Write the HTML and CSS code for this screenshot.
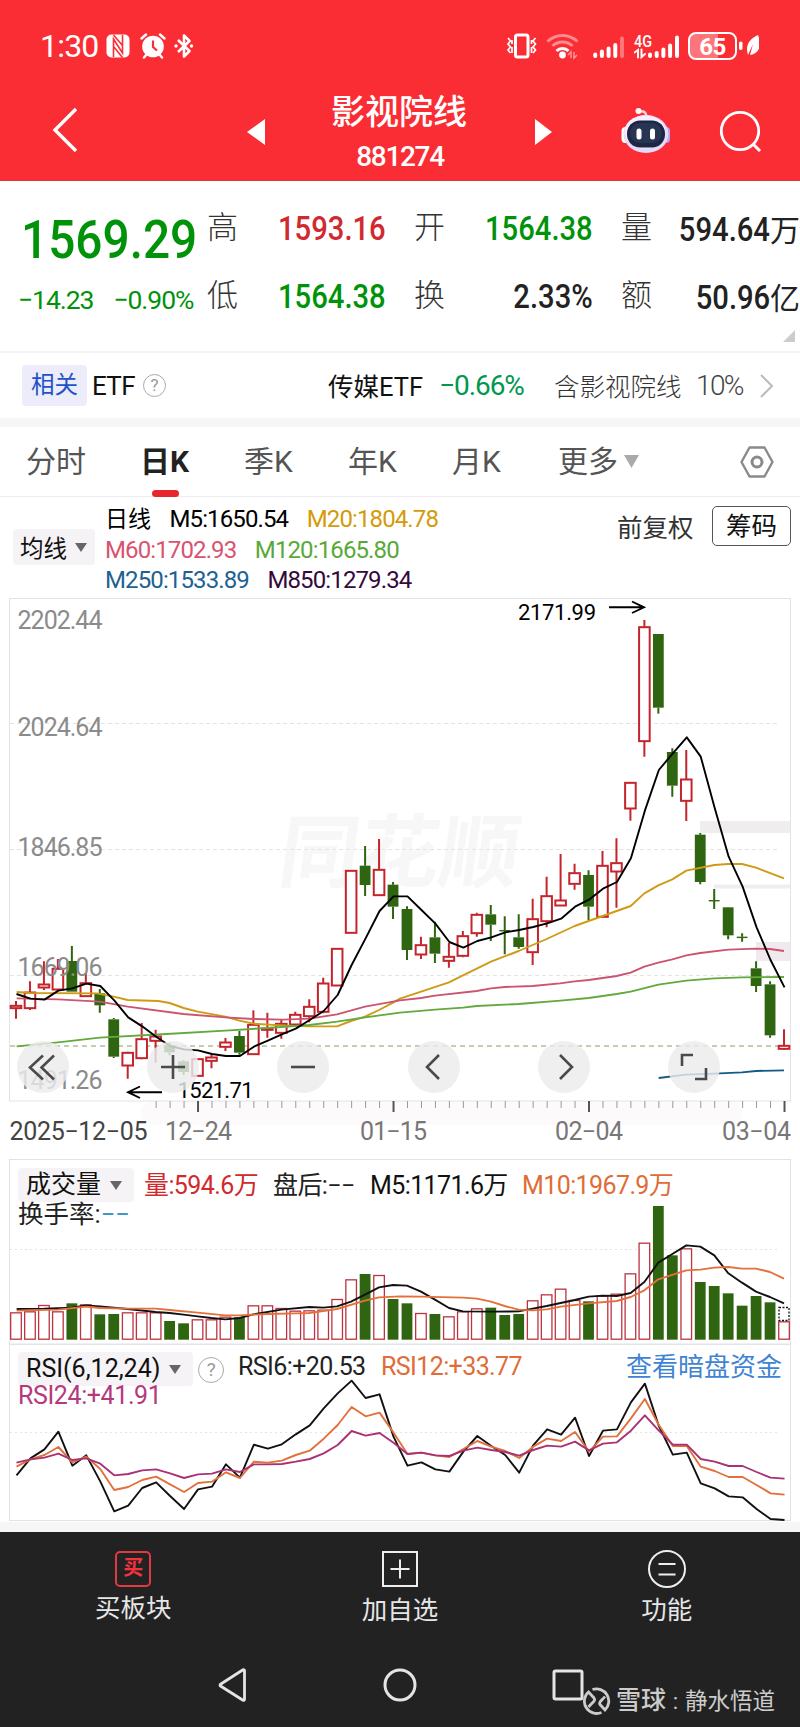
FILE: index.html
```html
<!DOCTYPE html>
<html lang="zh-CN">
<head>
  <meta charset="UTF-8" />
  <meta name="viewport" content="width=device-width, initial-scale=1" />
  <title>影视院线 881274</title>
  <link rel="stylesheet" href="styles.css">
</head>
<body>
  <header class="header">
    <div class="status">
      <div class="status-left">
        <span class="clock">1:30</span>
        <svg class="nfc" width="24" height="24" viewBox="0 0 24 24">
          <rect x="0.5" y="0.5" width="23" height="23" rx="5" fill="#fff"/>
          <path d="M7.500 23V5l9 14V1M7.500 1l9 10.500M7.500 12.500l9 11" fill="none" stroke="#fb2d34" stroke-width="1.600"/>
        </svg>
        <svg class="alarm" width="26" height="26" viewBox="0 0 26 26">
          <circle cx="13" cy="13.500" r="10.800" fill="#fff"/>
          <path d="M1.500 5.500L6 1.500M24.500 5.500L20 1.500M4 24.500l3-3.500M22 24.500l-3-3.500" stroke="#fff" stroke-width="2.400" stroke-linecap="round"/>
          <path d="M13 7.500v6.500l4 3.500" fill="none" stroke="#fb2d34" stroke-width="2.200"/>
        </svg>
        <svg class="bluetooth" width="20" height="26" viewBox="0 0 20 26">
          <path d="M4 7l11.500 11L10 23.500V2.500L15.500 8 4 19" fill="none" stroke="#fff" stroke-width="2.600" stroke-linejoin="round"/>
          <circle cx="2" cy="13" r="1.700" fill="#fff"/><circle cx="17.500" cy="13" r="1.700" fill="#fff"/>
        </svg>
      </div>
      <div class="status-right">
        <svg width="32" height="28" viewBox="0 0 32 28" fill="none" stroke="#fff">
          <rect x="9.500" y="3" width="12.500" height="22" rx="2" stroke-width="3"/>
          <path d="M2 6l2.500 3L2 12l2.500 3L2 18l2.500 3M6 8v4M6 15v6M29.500 6L27 9l2.500 3-2.500 3 2.500 3-2.500 3M25.500 8v4M25.500 15v6" stroke-width="1.700"/>
        </svg>
        <svg class="wifi" width="34" height="28" viewBox="0 0 34 28" fill="none" stroke="#fff" stroke-width="3">
          <path d="M1.500 9.500a21.500 21.500 0 0 1 30 0M6.500 14a14.500 14.500 0 0 1 20 0" opacity="0.450"/>
          <path d="M10.500 19a8.500 8.500 0 0 1 12 0"/>
          <circle cx="16.500" cy="23" r="3.400" fill="#fff" stroke="none"/>
          <path d="M22 23l3-3v6M28 20v6l3-3" stroke-width="1.500" opacity="0.500"/>
        </svg>
        <svg class="signal" width="32" height="28" viewBox="0 0 32 28" stroke="#fff" stroke-width="4" stroke-linecap="round">
          <path d="M2.200 22.500v1.500M8.900 19.500v4.500M15.600 16.500v7.500M22.300 13v11"/>
          <path d="M29 6.500v17.500" opacity="0.350"/>
        </svg>
        <svg class="signal-4g" width="46" height="28" viewBox="0 0 46 28" stroke="#fff" stroke-width="4" stroke-linecap="round">
          <path d="M16 22.500v1.500M22.700 21v3M29.400 17.500v6.500M36.100 13.500v10.500M43 5.500v18.500"/>
          <path d="M0.500 20.500l3.500-2.500v7.500M7.500 17.500v7.500l3.500-3" fill="none" stroke-width="2"/>
          <text x="0" y="15" textLength="18" lengthAdjust="spacingAndGlyphs" stroke="none" fill="#fff">4G</text>
        </svg>
        <div class="battery">65</div>
        <svg class="leaf" width="20" height="28" viewBox="0 0 20 28">
          <rect x="0" y="9.500" width="3.500" height="8.500" rx="1.700" fill="#fff"/>
          <path d="M9 23C6 14 10 7 19 3c4 10 2 18-8 20l3-11z" fill="#fff"/>
        </svg>
      </div>
    </div>
    <div class="titlebar">
      <svg class="back" width="26" height="46" viewBox="0 0 26 46"><path d="M24 2L3 23l21 21" fill="none" stroke="#fff" stroke-width="3.400"/></svg>
      <svg class="prev" width="18" height="26" viewBox="0 0 18 26"><path d="M18 0v26L0 13z" fill="#fff"/></svg>
      <div class="title">
        <h1>影视院线</h1>
        <div class="code">881274</div>
      </div>
      <svg class="next" width="18" height="26" viewBox="0 0 18 26"><path d="M0 0v26l17-13z" fill="#fff"/></svg>
      <svg class="robot" width="50" height="48" viewBox="0 0 50 48">
        <path d="M18 4.500c5-1 7 1 7.500 5" fill="none" stroke="#f9cdd8" stroke-width="2.500"/>
        <circle cx="17.500" cy="4" r="3" fill="#fff"/>
        <rect x="0.500" y="20" width="9" height="16" rx="4" fill="#fff"/>
        <rect x="40" y="20" width="9" height="16" rx="4" fill="#b9a3f2"/>
        <ellipse cx="25" cy="27" rx="22.500" ry="19" fill="#e4d9fb"/>
        <ellipse cx="24" cy="25" rx="20.500" ry="16.500" fill="#f6effd"/>
        <rect x="6" y="13.500" width="38" height="27" rx="13" fill="#1d2744"/>
        <rect x="9" y="16" width="32" height="20" rx="10" fill="#303f5b" opacity="0.600"/>
        <rect x="15.500" y="21.500" width="5" height="11" rx="2.500" fill="#fff"/>
        <rect x="29" y="21.500" width="5" height="11" rx="2.500" fill="#fff"/>
      </svg>
      <svg class="search" width="44" height="44" viewBox="0 0 44 44"><circle cx="21" cy="21" r="18.700" fill="none" stroke="#fff" stroke-width="2.800"/><path d="M34 34l7 7" stroke="#fff" stroke-width="3"/></svg>
    </div>
  </header>

  <section class="quote">
    <div class="last">
      <div class="last-price">1569.29</div>
      <div class="last-change"><span>−14.23</span><span>−0.90%</span></div>
    </div>
    <div class="stats">
      <div class="stat"><label>高</label><b class="up"><span>1593.16</span></b></div>
      <div class="stat"><label>开</label><b class="down"><span>1564.38</span></b></div>
      <div class="stat"><label>量</label><b><span>594.64</span><i>万</i></b></div>
      <div class="stat"><label>低</label><b class="down"><span>1564.38</span></b></div>
      <div class="stat"><label>换</label><b><span>2.33%</span></b></div>
      <div class="stat"><label>额</label><b><span>50.96</span><i>亿</i></b></div>
    </div>
    <svg class="corner" width="12" height="12" viewBox="0 0 12 12"><path d="M12 0v12H0z" fill="#ccc"/></svg>
  </section>

  <section class="related">
    <span class="tag">相关</span>
    <span class="etf">ETF</span>
    <span class="help">?</span>
    <span class="etf-name">传媒ETF</span>
    <span class="etf-change">−0.66%</span>
    <span class="etf-weight">含影视院线</span>
    <span class="etf-pct">10%</span>
    <svg width="14" height="24" viewBox="0 0 14 24"><path d="M1 1l11 11L1 23" fill="none" stroke="#bbb" stroke-width="2"/></svg>
  </section>

  <nav class="tabs">
    <span>分时</span>
    <span class="active">日K</span>
    <span>季K</span>
    <span>年K</span>
    <span>月K</span>
    <span>更多<svg width="15" height="13" viewBox="0 0 15 13"><path d="M0 0h15L7.500 13z" fill="#aaa"/></svg></span>
    <svg class="gear" width="34" height="32" viewBox="0 0 34 32" fill="none" stroke="#8a8a8a"><path d="M9.500 1.500h15l8 14.500-8 14.500h-15L1.500 16z" stroke-width="2.400" stroke-linejoin="round"/><circle cx="17" cy="16" r="5" stroke-width="3"/></svg>
  </nav>

  <section class="averages">
    <span class="pill pill-ma">均线<i class="caret"></i></span>
    <div class="ma-list">
      <div><span class="cjk">日线</span><span>M5:1650.54</span><span class="m20">M20:1804.78</span></div>
      <div><span class="m60">M60:1702.93</span><span class="m120">M120:1665.80</span></div>
      <div><span class="m250">M250:1533.89</span><span class="m850">M850:1279.34</span></div>
    </div>
    <span class="adjust">前复权</span>
    <span class="chips">筹码</span>
  </section>

  <section class="kline">
    <svg id="kline" width="800" height="561" viewBox="0 0 800 561"></svg>
    <div class="tools">
      <span><svg width="52" height="52"><path d="M26 14.500L13 26.500l13 12M37 14.500L24.500 26.500l12.500 12"/></svg></span>
      <span><svg width="52" height="52"><path d="M26 14v24M14 26h24"/></svg></span>
      <span><svg width="52" height="52"><path d="M14 26h24"/></svg></span>
      <span><svg width="52" height="52"><path d="M31 14L19 26l12 12"/></svg></span>
      <span><svg width="52" height="52"><path d="M22 14l12 12-12 12"/></svg></span>
      <span><svg width="52" height="52"><path d="M14 25V14h11M27 38h11V27"/></svg></span>
    </div>
  </section>

  <section class="panel volume">
    <svg id="volume" width="800" height="185" viewBox="0 0 800 185"></svg>
    <div class="legend">
      <div class="legend-row">
        <span class="pill pill-vol">成交量<i class="caret"></i></span>
        <span class="red">量:594.6万</span>
        <span class="after">盘后:<em>−−</em></span>
        <span class="vm5">M5:1171.6万</span>
        <span class="orange">M10:1967.9万</span>
      </div>
      <div class="legend-sub">换手率:<em class="blue">−−</em></div>
    </div>
  </section>

  <section class="panel rsi">
    <svg id="rsi" width="800" height="178" viewBox="0 0 800 178"></svg>
    <div class="legend">
      <div class="legend-row">
        <span class="pill pill-rsi">RSI(6,12,24)<i class="caret"></i></span>
        <span class="help">?</span>
        <span class="rsi6">RSI6:+20.53</span>
        <span class="orange">RSI12:+33.77</span>
        <a class="link">查看暗盘资金</a>
      </div>
      <div class="legend-sub purple">RSI24:+41.91</div>
    </div>
  </section>

  <footer class="footer">
    <div class="actions">
      <div class="action">
        <span class="buy">买</span>
        <span>买板块</span>
      </div>
      <div class="action">
        <svg width="36" height="36" viewBox="0 0 36 36" fill="none" stroke="#eee" stroke-width="2"><rect x="1" y="1" width="34" height="34"/><path d="M18 8.500v19M8.500 18h19"/></svg>
        <span>加自选</span>
      </div>
      <div class="action">
        <svg width="38" height="38" viewBox="0 0 38 38" fill="none" stroke="#eee" stroke-width="2"><circle cx="19" cy="19" r="18"/><path d="M10.500 14h17M10.500 24.500h17"/></svg>
        <span>功能</span>
      </div>
    </div>
    <div class="sysnav">
      <svg width="30" height="34" viewBox="0 0 30 34"><path d="M26.500 2.500v29a1 1 0 0 1-1.500.800L2.500 18a1 1 0 0 1 0-1.700L25 1.800a1 1 0 0 1 1.500.700z" fill="none" stroke="#e4e4e4" stroke-width="2.800"/></svg>
      <svg width="34" height="34" viewBox="0 0 34 34"><circle cx="17" cy="17" r="15" fill="none" stroke="#e4e4e4" stroke-width="3"/></svg>
      <svg width="32" height="32" viewBox="0 0 32 32"><rect x="2" y="2" width="28" height="28" rx="1.500" fill="none" stroke="#e4e4e4" stroke-width="3"/></svg>
    </div>
    <div class="credit">
      <svg width="28" height="28" viewBox="0 0 28 28" fill="none" stroke="#ccc" stroke-width="2.800">
        <path d="M9.500 2.500a12.300 12.300 0 0 1 12.500 20.500L17 17.500c-2-2.500 2-4 5-8M18.500 25.500A12.300 12.300 0 0 1 5.500 5l5.500 6c2 2.500-1 4-5.500 9"/>
      </svg>
      <span class="brand">雪球</span><span class="colon">:</span><span>静水悟道</span>
    </div>
  </footer>
  <script src="charts.js"></script>
</body>
</html>
```
FILE: styles.css
```css
    * {
      box-sizing: border-box;
    }
    body {
      font-family: Roboto, "Noto Sans CJK SC", sans-serif;
      background: #fff;
      margin: 0;
      width: 800px;
      color: #222;
      overflow-x: hidden;
    }
    svg {
      display: block;
      flex: none;
    }
    i, em {
      font-style: normal;
    }
    span, a, label, b {
      white-space: nowrap;
    }

    /* Header */
    .header {
      height: 181px;
      background: #fb2d34;
      color: #fff;
      padding-top: 26px;
      border-bottom: 1px solid #d9373d;
    }
    .status {
      height: 40px;
      display: flex;
      justify-content: space-between;
      align-items: center;
      padding: 0 41px 0 40px;
    }
    .status-left, .status-right {
      display: flex;
      align-items: center;
    }
    .clock {
      font-size: 32px;
      width: 66px;
      letter-spacing: -0.800px;
    }
    .alarm {
      margin-left: 10px;
    }
    .bluetooth {
      margin-left: 8px;
    }
    .wifi {
      margin-left: 8px;
    }
    .signal {
      margin-left: 13px;
    }
    .signal-4g {
      margin-left: 9px;
      font-size: 17px;
      font-weight: 500;
    }
    .battery {
      width: 49px;
      height: 28px;
      margin-left: 8px;
      border: 2px solid #fff;
      border-radius: 8px;
      background: linear-gradient(90deg, #fd747a 62%, #fb2d34 62%);
      font-size: 24px;
      font-weight: 700;
      line-height: 26px;
      text-align: center;
      letter-spacing: -0.500px;
    }
    .leaf {
      margin-left: 2px;
    }
    .titlebar {
      height: 114px;
      display: flex;
      align-items: center;
    }
    .back {
      margin: 14px 0 0 52px;
    }
    .prev {
      margin: 17px 0 0 169px;
    }
    .title {
      width: 270px;
      padding-top: 24px;
      text-align: center;
    }
    .title h1 {
      margin: -2px 0 0 -2px;
      font-size: 34px;
      line-height: 46px;
      font-weight: 500;
    }
    .code {
      font-size: 28px;
      line-height: 44px;
      font-weight: 500;
      letter-spacing: -1.300px;
    }
    .next {
      margin: 17px 0 0;
    }
    .robot {
      margin: 16px 0 0 68px;
    }
    .search {
      margin: 18px 0 0 48px;
    }

    /* Quote */
    .quote {
      position: relative;
      height: 172px;
      display: flex;
      border-bottom: 2px solid #f4f4f6;
    }
    .last {
      width: 207px;
      color: #00930a;
      padding: 30px 0 0 18px;
    }
    .last-price {
      margin-left: 3px;
      font-size: 54px;
      font-weight: 500;
      line-height: 58px;
      transform: scaleX(0.885);
      transform-origin: left;
    }
    .last-change {
      margin-top: 12px;
      display: flex;
      gap: 20px;
      font-size: 26.500px;
      line-height: 38px;
      letter-spacing: -1.050px;
    }
    .stats {
      width: 593px;
      padding-top: 13px;
      display: grid;
      grid-template-columns: repeat(3, 179px);
      grid-auto-rows: 68px;
      column-gap: 28px;
    }
    .stat {
      display: flex;
      justify-content: space-between;
      align-items: center;
    }
    .stat label {
      font-size: 31px;
      line-height: 40px;
      font-weight: 300;
      color: #333;
      margin-top: -1px;
    }
    .stat b {
      font-size: 33px;
      font-weight: 500;
    }
    .stat b span {
      display: inline-block;
      transform: scaleX(0.885);
      transform-origin: right;
    }
    .stat i {
      font-size: 30px;
      font-weight: 400;
    }
    .up {
      color: #d0292f;
    }
    .down {
      color: #00930a;
    }
    .corner {
      position: absolute;
      right: 5px;
      bottom: 9px;
    }

    /* Related ETF */
    .related {
      height: 74px;
      padding-left: 22px;
      display: flex;
      align-items: center;
      border-bottom: 9px solid #f6f6f7;
      font-size: 26px;
    }
    .tag {
      width: 65px;
      height: 41px;
      line-height: 41px;
      border-radius: 4px;
      background: #ececfa;
      color: #2352c8;
      font-size: 23.500px;
      text-align: center;
    }
    .etf {
      margin-left: 5px;
      width: 51px;
      color: #111;
      letter-spacing: -0.700px;
    }
    .help {
      width: 23px;
      height: 23px;
      border: 1.500px solid #aaa;
      border-radius: 50%;
      color: #999;
      font-size: 17px;
      line-height: 20px;
      text-align: center;
    }
    .etf-name {
      margin: -3px 0 0 162px;
      width: 111px;
      color: #111;
      font-size: 25.500px;
    }
    .etf-change {
      width: 115px;
      margin-top: -1px;
      color: #00984f;
      font-size: 28px;
      letter-spacing: -1.050px;
    }
    .etf-weight {
      width: 142px;
      margin-top: -3px;
      color: #333;
      font-size: 25.500px;
      font-weight: 300;
    }
    .etf-pct {
      width: 64px;
      margin-top: -1px;
      color: #444;
      font-size: 28px;
      font-weight: 300;
      letter-spacing: -1.600px;
    }

    /* Period tabs */
    .tabs {
      height: 70px;
      padding-left: 26px;
      display: grid;
      grid-template-columns: 114px 104px 104px 104px 106px 182px 34px;
      align-items: center;
      border-bottom: 1px solid #ececf0;
      font-size: 30px;
      color: #555;
    }
    .tabs span {
      position: relative;
      line-height: 69px;
    }
    .tabs span svg {
      display: inline-block;
      margin-left: 6px;
      vertical-align: 4px;
    }
    .tabs .active {
      color: #222;
      font-weight: 700;
    }
    .tabs .active::after {
      content: "";
      position: absolute;
      left: 12px;
      bottom: -1px;
      width: 27px;
      height: 7px;
      border-radius: 4px;
      background: #e8272c;
    }

    /* Moving averages */
    .averages {
      height: 101px;
      display: flex;
      align-items: flex-start;
      padding: 9px 9px 0 13px;
    }
    .pill {
      display: flex;
      align-items: center;
      background: #f5f3f5;
      border-radius: 4px;
      color: #111;
    }
    .caret {
      width: 0;
      height: 0;
      border: 6px solid transparent;
      border-top: 9px solid #666;
      border-bottom: none;
    }
    .pill-ma {
      margin-top: 23px;
      width: 82px;
      height: 36px;
      padding-left: 7px;
      font-size: 23.500px;
      gap: 8px;
    }
    .ma-list {
      margin: -2px 0 0 10px;
      width: 512px;
      font-size: 24px;
      line-height: 31px;
      letter-spacing: -0.880px;
      color: #000;
    }
    .ma-list div {
      display: flex;
      gap: 18.500px;
      height: 30.500px;
    }
    .ma-list .cjk {
      font-size: 23px;
      letter-spacing: 0;
    }
    .m20 {
      color: #d39b0a;
    }
    .m60 {
      color: #d9536f;
    }
    .m120 {
      color: #58a93a;
    }
    .m250 {
      color: #1c6292;
    }
    .m850 {
      color: #34093b;
    }
    .adjust {
      width: 95px;
      font-size: 25.500px;
      line-height: 44px;
      color: #333;
    }
    .chips {
      width: 79px;
      height: 40px;
      border: 1px solid #555;
      border-radius: 5px;
      font-size: 25.500px;
      line-height: 39px;
      text-align: center;
      color: #111;
    }

    /* Candles */
    .kline {
      position: relative;
      height: 561px;
    }
    .tools {
      position: absolute;
      left: 17px;
      top: 443px;
      display: flex;
      gap: 78.200px;
    }
    .tools span {
      width: 52px;
      height: 52px;
      border-radius: 50%;
      background: rgba(235, 235, 237, 0.820);
    }
    .tools path {
      fill: none;
      stroke: #4a4a4a;
      stroke-width: 2.600;
    }
    .axis {
      font-size: 25px;
      fill: #8b8b8b;
    }
    .date {
      font-size: 25px;
      fill: #777;
    }
    .mark {
      font-size: 22px;
      fill: #000;
    }
    .brandmark {
      font-size: 80px;
      font-weight: 700;
      fill: #f7f7f8;
    }
    .line {
      fill: none;
      stroke-width: 1.900;
      stroke-linejoin: round;
    }

    /* Indicator panels */
    .panel {
      display: grid;
    }
    .panel > * {
      grid-area: 1 / 1;
    }
    .legend {
      padding: 9px 18px 0;
      font-size: 25px;
      letter-spacing: -0.600px;
      color: #222;
    }
    .legend-row {
      display: flex;
      height: 34px;
      line-height: 36px;
    }
    .legend .pill {
      padding-left: 8px;
      margin-right: 10px;
      height: 34px;
    }
    .pill-vol {
      width: 116px;
      gap: 9px;
      letter-spacing: 0;
    }
    .legend .pill-rsi {
      width: 175px;
      gap: 9px;
      letter-spacing: 0;
      line-height: 36px;
    }
    .legend .red {
      width: 129px;
      color: #d12a2a;
    }
    .legend .after {
      width: 97px;
    }
    .legend .vm5 {
      width: 152px;
      color: #111;
    }
    .legend-sub {
      font-size: 25.500px;
      line-height: 25px;
      letter-spacing: 0;
    }
    .blue {
      color: #3f97c9;
    }
    .orange {
      color: #e06c38;
    }
    .purple {
      color: #b43a7c;
    }
    .rsi .legend {
      padding-top: 8px;
    }
    .rsi .legend-row {
      line-height: 30px;
    }
    .rsi .legend-sub {
      font-size: 25px;
      line-height: 20px;
      letter-spacing: -0.400px;
    }
    .rsi .help {
      width: 26px;
      height: 26px;
      margin: 5px 14px 0 -5px;
      line-height: 23px;
      font-size: 19px;
    }
    .rsi6 {
      width: 143px;
    }
    .link {
      margin-left: auto;
      font-size: 26px;
      letter-spacing: 0;
      color: #3f84d4;
    }

    /* Footer */
    .footer {
      position: relative;
      height: 205px;
      background: #222;
      border-top: 10px solid #f6f6f6;
      color: #e6e6e6;
    }
    .actions {
      height: 118px;
      padding-top: 19px;
      display: grid;
      grid-template-columns: repeat(3, 1fr);
    }
    .action {
      display: flex;
      flex-direction: column;
      align-items: center;
      font-size: 25.500px;
      line-height: 38px;
      gap: 4px;
    }
    .action:first-child {
      gap: 2px;
    }
    .action:last-child {
      margin-top: -1px;
      gap: 3px;
    }
    .buy {
      width: 36px;
      height: 36px;
      border: 2px solid #e13a42;
      border-radius: 5px;
      color: #f5323c;
      font-size: 20px;
      font-weight: 700;
      line-height: 31px;
      text-align: center;
    }
    .sysnav {
      display: flex;
      align-items: center;
      height: 70px;
      padding-left: 218px;
      gap: 135px;
    }
    .credit {
      position: absolute;
      left: 583px;
      top: 154px;
      display: flex;
      align-items: center;
      font-size: 22.500px;
      line-height: 30px;
      color: #ccc;
    }
    .brand {
      margin-left: 5px;
      font-size: 25px;
      font-weight: 500;
    }
    .colon {
      width: 19px;
      text-align: center;
    }
```
FILE: charts.js
```javascript
const RED = '#c4252c', GREEN = '#2f6410';
const STEP = 13.964;
const cx = i => 16 + i * STEP;

// [direction, high, body top, body bottom, low], in thirds of a pixel
const candles = [
  ['r',543,556,566,596],['r',484,516,566,570],['r',424,492,504,510],['r',417,445,510,512],
  ['g',378,423,515,515],['r',460,488,530,530],['g',507,520,556,578],['g',594,598,710,714],
  ['r',695,697,738,776],['r',609,656,716,718],['r',629,648,664,728],['g',668,676,697,706],
  ['g',720,724,756,765],['r',716,716,769,769],['r',704,711,724,745],['r',654,666,682,693],
  ['g',633,648,698,704],['r',571,613,704,704],['r',578,625,630,653],['r',600,610,640,656],
  ['r',575,583,615,618],['r',538,559,590,607],['r',473,489,577,580],['r',385,385,498,498],
  ['r',151,151,340,340],['g',78,137,195,228],['r',57,148,227,228],['g',186,194,260,297],
  ['g',259,267,390,420],['r',350,374,405,417],['g',305,352,401,429],['r',369,409,424,443],
  ['r',333,347,409,412],['r',278,283,341,350],['g',255,283,314,363],['g',289,330,333,403],
  ['g',283,352,381,386],['r',236,296,398,435],['r',170,227,305,322],['r',102,240,258,258],
  ['r',131,158,193,209],['g',151,165,260,300],['r',93,136,292,292],['r',55,128,156,263],
  ['r',-113,-113,-33,2],['r',-600,-580,-235,-190],['g',-558,-558,-337,-319],['g',-215,-204,-103,-70],
  ['r',-210,-123,-56,3],['g',39,44,186,193],['g',207,240,243,267],['g',261,262,346,358],
  ['g',340,350,353,365],['g',424,445,498,516],['g',484,493,646,653],['r',628,676,688,690]
];

const ma5 = [522,536,539,512,505,491,498,541,592,619,650,678,688,691,702,708,708,680,662,643,626,600,573,525,435,355,273,229,229,270,311,366,383,363,352,337,330,321,310,296,260,239,206,186,115,-28,-150,-200,-248,-190,-36,110,200,322,420,502];
const ma20 = [50,516,90,519,290,520,341,530,383,540,475,543,509,549,551,564,593,575,676,590,718,602,760,611,844,616,928,619,1011,619,1053,603,1095,590,1137,570,1179,548,1200,536,1347,487,1389,466,1473,425,1556,393,1640,357,1724,318,1808,288,1892,258,1933,220,1975,196,2017,178,2059,152,2143,135,2185,132,2226,132,2268,143,2352,175];
const ma60 = [50,535,174,538,299,545,383,560,550,582,676,592,760,597,850,599,928,596,1011,583,1095,560,1200,541,1263,534,1305,527,1430,513,1473,505,1514,501,1598,498,1680,490,1724,484,1766,480,1850,468,1892,458,1933,440,1975,428,2017,418,2059,406,2101,399,2185,389,2268,386,2310,387,2352,393];
const ma120 = [50,679,174,667,299,653,500,642,676,632,800,624,928,615,1011,605,1095,592,1200,578,1305,569,1389,563,1430,558,1556,552,1682,542,1766,534,1850,522,1892,515,1975,494,2059,482,2143,475,2226,472,2352,471];
const ma250 = [1976,774,2059,764,2143,761,2226,757,2268,753,2352,751];

const volumes = [487,484,465,484,460,463,493,492,487,487,487,513,520,508,508,500,502,466,466,474,482,481,479,447,388,372,375,447,460,489,492,499,484,475,473,495,492,451,433,416,450,454,437,431,370,278,168,316,295,396,408,430,467,438,457,514];
const vol5 = [50,477,132,476,216,473,258,466,300,469,383,477,467,486,509,489,551,494,593,499,634,504,676,508,718,504,760,493,844,479,928,471,970,473,1011,469,1053,455,1095,434,1137,412,1179,405,1221,407,1263,425,1305,449,1347,474,1389,484,1473,485,1556,484,1598,476,1640,468,1724,450,1766,440,1808,437,1850,438,1892,429,1933,396,1975,338,2017,312,2059,286,2101,290,2143,316,2185,370,2226,398,2268,425,2310,441,2352,460];
const vol10 = [50,482,174,479,258,470,300,474,383,476,467,476,509,480,593,488,676,496,718,496,802,492,886,490,928,489,1011,477,1095,452,1137,442,1200,439,1263,440,1389,443,1431,446,1473,455,1514,468,1556,479,1598,481,1640,478,1682,470,1766,460,1850,453,1892,441,1933,421,1975,388,2059,361,2101,359,2143,353,2185,351,2226,356,2268,356,2310,366,2352,386];

const rsi6 = [976,925,898,845,947,916,994,1084,1067,1014,997,1038,1077,1018,1010,943,983,884,896,883,853,826,775,730,692,744,733,860,947,937,958,965,905,858,888,915,968,886,838,854,803,918,842,838,757,701,828,914,908,1000,1015,1039,1042,1077,1107,1110];
const rsi12 = [950,928,915,891,937,920,957,1020,1011,990,980,1003,1026,999,995,967,984,935,938,932,915,902,866,825,771,799,788,848,912,908,916,921,897,873,890,903,924,890,866,873,846,905,860,859,805,747,825,888,888,950,963,981,981,1005,1030,1034];
const rsi24 = [938,928,923,911,930,925,941,976,972,961,958,970,984,973,971,958,966,943,943,942,935,927,910,885,843,857,849,878,912,908,916,918,902,893,900,906,917,900,887,890,875,901,881,877,842,796,842,884,884,927,935,948,948,966,983,986];

function polyline(points, color) {
  return `<polyline class="line" stroke="${color}" points="${points.join(' ')}"/>`;
}

// One value per trading day
function daily(values, y, color) {
  return polyline(values.map((v, i) => `${cx(i) + 0.5},${y(v)}`), color);
}

// Flat list of x, y pairs
function pairs(list, y, color) {
  const pts = [];
  for (let i = 0; i < list.length; i += 2) pts.push(`${list[i] / 3},${y(list[i + 1])}`);
  return polyline(pts, color);
}

function guide(y, color = '#e4e4e6', dash = '4 3') {
  return `<path d="M10 ${y}H780" stroke="${color}" stroke-dasharray="${dash}"/>`;
}

function label(cls, x, y, length, text, extra = '') {
  return `<text class="${cls}" x="${x}" y="${y}" textLength="${length}" ${extra}>${text}</text>`;
}

function drawKline() {
  const y = v => v / 3 + 222;
  let out = '<rect x="141" y="503" width="601" height="24" rx="12" fill="#fdfafb"/>';
  out += '<rect x="9.500" y="0.500" width="781" height="502.500" fill="none" stroke="#e3e3e5"/>';
  out += '<text class="brandmark" textLength="240" transform="translate(276 283) skewX(-8)">同花顺</text>';
  out += '<rect x="700" y="223" width="90" height="12" fill="#f0edef"/><rect x="714" y="286.500" width="76" height="4" fill="#f0edef"/><rect x="756" y="344" width="34" height="19" fill="#f0e9ed"/>';
  out += guide(125.5) + guide(251.5) + guide(377.5) + guide(448, '#83a05c', '5 4');

  candles.forEach(([dir, high, top, bottom, low], i) => {
    const x = cx(i), color = dir === 'r' ? RED : GREEN;
    const h = Math.max((bottom - top) / 3, 1.4);
    out += `<path d="M${x} ${y(high)}V${y(top)}M${x} ${y(bottom)}V${y(low)}" stroke="${color}" stroke-width="2"/>`;
    if (dir === 'r') {
      out += `<rect x="${x - 5.3}" y="${y(top) + 0.5}" width="10.600" height="${Math.max(h - 1, 1)}" fill="#fff" stroke="${color}" stroke-width="2"/>`;
    } else {
      out += `<rect x="${x - 5.4}" y="${y(top)}" width="10.800" height="${h}" fill="${color}"/>`;
    }
  });

  out += pairs(ma20, y, '#cf9a14') + pairs(ma60, y, '#cb5470') + pairs(ma120, y, '#63a93c') + pairs(ma250, y, '#145a86');
  out += daily(ma5, y, '#000');

  ['2202.44', '2024.64', '1846.85', '1669.06', '1491.26'].forEach((t, i) => {
    out += label('axis', 17.5, [31, 138, 258, 377.5, 491][i], 85, t);
  });

  out += label('mark', 518, 22, 78, '2171.99') + label('mark', 177.5, 500, 76, '1521.71');
  out += '<path d="M609 9.300H644M632 3.500L644 9.300L632 15M162 494.200H128M140 488.500L128 494.200L140 500" fill="none" stroke="#000" stroke-width="1.900"/>';

  for (let i = 10; i < 56; i++) {
    const major = (i - 13) % 14 === 0;
    out += `<path d="M${cx(i) + 0.5} 503V${major ? 514 : 510}" stroke="${major ? '#555' : '#999'}" stroke-width="${major ? 2 : 1}"/>`;
  }
  out += label('date', 9.5, 542, 138, '2025−12−05', 'style="fill:#444"');
  out += label('date', 165, 542, 67, '12−24') + label('date', 360, 542, 67, '01−15');
  out += label('date', 555, 542, 68, '02−04') + label('date', 722, 542, 69, '03−04');
  document.getElementById('kline').innerHTML = out;
}

function drawVolume() {
  const y = v => v / 3 - 9;
  let out = '<rect x="9.500" y="0.500" width="781" height="184.500" fill="none" stroke="#e3e3e5"/>' + guide(90.5, '#e4e4e6', '2 3');
  volumes.forEach((v, i) => {
    const x = cx(i), top = y(v), h = 180.7 - top;
    out += candles[i][0] === 'r'
      ? `<rect x="${x - 5.3}" y="${top + 0.5}" width="10.600" height="${h - 1}" fill="#fff" stroke="#bb3440" stroke-width="1.300"/>`
      : `<rect x="${x - 5.4}" y="${top}" width="10.800" height="${h}" fill="${GREEN}"/>`;
  });
  out += '<rect x="779" y="148.500" width="10" height="13" fill="none" stroke="#111" stroke-width="1.300" stroke-dasharray="2 1.500"/>';
  out += pairs(vol5, y, '#111') + pairs(vol10, y, '#e4703c');
  document.getElementById('volume').innerHTML = out;
}

function drawRsi() {
  const y = v => v / 3 - 194;
  let out = '<rect x="9.500" y="0.500" width="781" height="176" fill="none" stroke="#e3e3e5"/>' + guide(88.5, '#e4e4e6', '2 3');
  out += daily(rsi6, y, '#111') + daily(rsi12, y, '#e0703c') + daily(rsi24, y, '#a93274');
  document.getElementById('rsi').innerHTML = out;
}

drawKline();
drawVolume();
drawRsi();
```
